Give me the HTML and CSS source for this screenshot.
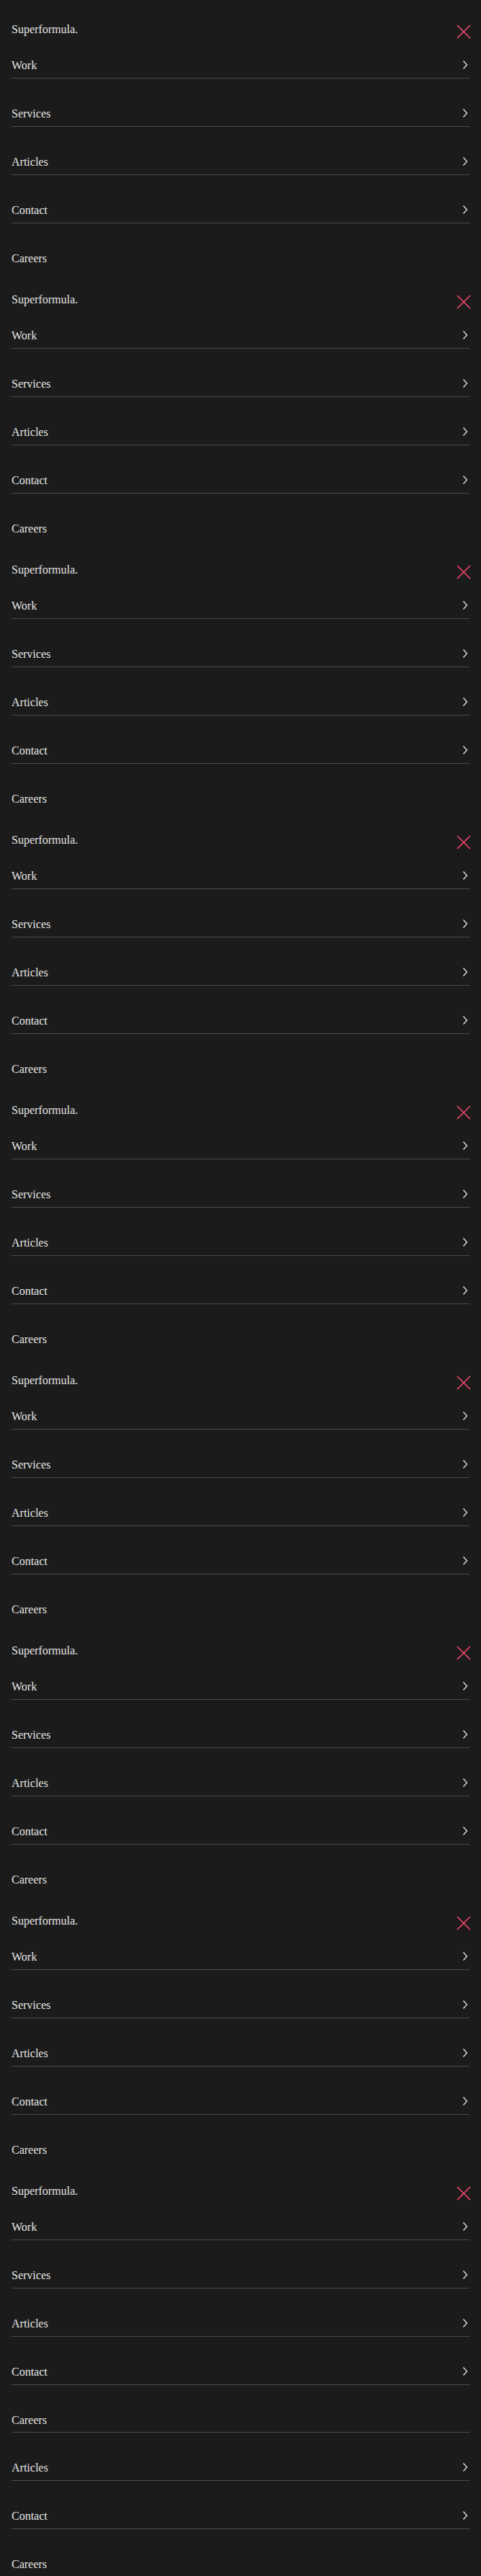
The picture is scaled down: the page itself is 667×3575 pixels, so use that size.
FILE: index.html
```html
<!DOCTYPE html>
<html lang="en">
<head>
<meta charset="utf-8">
<title>Superformula menu</title>
<link rel="stylesheet" href="styles.css">
</head>
<body>
<div class="page">
  <section class="menu">
    <header class="menu-head"><span class="logo">Superformula.</span><svg class="close" viewBox="0 0 20 20"><path d="M1 1L19 19M19 1L1 19"/></svg></header>
    <ul class="menu-list">
      <li class="item"><span class="label">Work</span><svg class="chev" viewBox="0 0 10 19"><polyline points="1.5,2.5 6.5,8 1.5,13.5"/></svg></li>
      <li class="item"><span class="label">Services</span><svg class="chev" viewBox="0 0 10 19"><polyline points="1.5,2.5 6.5,8 1.5,13.5"/></svg></li>
      <li class="item"><span class="label">Articles</span><svg class="chev" viewBox="0 0 10 19"><polyline points="1.5,2.5 6.5,8 1.5,13.5"/></svg></li>
      <li class="item"><span class="label">Contact</span><svg class="chev" viewBox="0 0 10 19"><polyline points="1.5,2.5 6.5,8 1.5,13.5"/></svg></li>
      <li class="item"><span class="label">Careers</span></li>
    </ul>
  </section>
  <section class="menu">
    <header class="menu-head"><span class="logo">Superformula.</span><svg class="close" viewBox="0 0 20 20"><path d="M1 1L19 19M19 1L1 19"/></svg></header>
    <ul class="menu-list">
      <li class="item"><span class="label">Work</span><svg class="chev" viewBox="0 0 10 19"><polyline points="1.5,2.5 6.5,8 1.5,13.5"/></svg></li>
      <li class="item"><span class="label">Services</span><svg class="chev" viewBox="0 0 10 19"><polyline points="1.5,2.5 6.5,8 1.5,13.5"/></svg></li>
      <li class="item"><span class="label">Articles</span><svg class="chev" viewBox="0 0 10 19"><polyline points="1.5,2.5 6.5,8 1.5,13.5"/></svg></li>
      <li class="item"><span class="label">Contact</span><svg class="chev" viewBox="0 0 10 19"><polyline points="1.5,2.5 6.5,8 1.5,13.5"/></svg></li>
      <li class="item"><span class="label">Careers</span></li>
    </ul>
  </section>
  <section class="menu">
    <header class="menu-head"><span class="logo">Superformula.</span><svg class="close" viewBox="0 0 20 20"><path d="M1 1L19 19M19 1L1 19"/></svg></header>
    <ul class="menu-list">
      <li class="item"><span class="label">Work</span><svg class="chev" viewBox="0 0 10 19"><polyline points="1.5,2.5 6.5,8 1.5,13.5"/></svg></li>
      <li class="item"><span class="label">Services</span><svg class="chev" viewBox="0 0 10 19"><polyline points="1.5,2.5 6.5,8 1.5,13.5"/></svg></li>
      <li class="item"><span class="label">Articles</span><svg class="chev" viewBox="0 0 10 19"><polyline points="1.5,2.5 6.5,8 1.5,13.5"/></svg></li>
      <li class="item"><span class="label">Contact</span><svg class="chev" viewBox="0 0 10 19"><polyline points="1.5,2.5 6.5,8 1.5,13.5"/></svg></li>
      <li class="item"><span class="label">Careers</span></li>
    </ul>
  </section>
  <section class="menu">
    <header class="menu-head"><span class="logo">Superformula.</span><svg class="close" viewBox="0 0 20 20"><path d="M1 1L19 19M19 1L1 19"/></svg></header>
    <ul class="menu-list">
      <li class="item"><span class="label">Work</span><svg class="chev" viewBox="0 0 10 19"><polyline points="1.5,2.5 6.5,8 1.5,13.5"/></svg></li>
      <li class="item"><span class="label">Services</span><svg class="chev" viewBox="0 0 10 19"><polyline points="1.5,2.5 6.5,8 1.5,13.5"/></svg></li>
      <li class="item"><span class="label">Articles</span><svg class="chev" viewBox="0 0 10 19"><polyline points="1.5,2.5 6.5,8 1.5,13.5"/></svg></li>
      <li class="item"><span class="label">Contact</span><svg class="chev" viewBox="0 0 10 19"><polyline points="1.5,2.5 6.5,8 1.5,13.5"/></svg></li>
      <li class="item"><span class="label">Careers</span></li>
    </ul>
  </section>
  <section class="menu">
    <header class="menu-head"><span class="logo">Superformula.</span><svg class="close" viewBox="0 0 20 20"><path d="M1 1L19 19M19 1L1 19"/></svg></header>
    <ul class="menu-list">
      <li class="item"><span class="label">Work</span><svg class="chev" viewBox="0 0 10 19"><polyline points="1.5,2.5 6.5,8 1.5,13.5"/></svg></li>
      <li class="item"><span class="label">Services</span><svg class="chev" viewBox="0 0 10 19"><polyline points="1.5,2.5 6.5,8 1.5,13.5"/></svg></li>
      <li class="item"><span class="label">Articles</span><svg class="chev" viewBox="0 0 10 19"><polyline points="1.5,2.5 6.5,8 1.5,13.5"/></svg></li>
      <li class="item"><span class="label">Contact</span><svg class="chev" viewBox="0 0 10 19"><polyline points="1.5,2.5 6.5,8 1.5,13.5"/></svg></li>
      <li class="item"><span class="label">Careers</span></li>
    </ul>
  </section>
  <section class="menu">
    <header class="menu-head"><span class="logo">Superformula.</span><svg class="close" viewBox="0 0 20 20"><path d="M1 1L19 19M19 1L1 19"/></svg></header>
    <ul class="menu-list">
      <li class="item"><span class="label">Work</span><svg class="chev" viewBox="0 0 10 19"><polyline points="1.5,2.5 6.5,8 1.5,13.5"/></svg></li>
      <li class="item"><span class="label">Services</span><svg class="chev" viewBox="0 0 10 19"><polyline points="1.5,2.5 6.5,8 1.5,13.5"/></svg></li>
      <li class="item"><span class="label">Articles</span><svg class="chev" viewBox="0 0 10 19"><polyline points="1.5,2.5 6.5,8 1.5,13.5"/></svg></li>
      <li class="item"><span class="label">Contact</span><svg class="chev" viewBox="0 0 10 19"><polyline points="1.5,2.5 6.5,8 1.5,13.5"/></svg></li>
      <li class="item"><span class="label">Careers</span></li>
    </ul>
  </section>
  <section class="menu">
    <header class="menu-head"><span class="logo">Superformula.</span><svg class="close" viewBox="0 0 20 20"><path d="M1 1L19 19M19 1L1 19"/></svg></header>
    <ul class="menu-list">
      <li class="item"><span class="label">Work</span><svg class="chev" viewBox="0 0 10 19"><polyline points="1.5,2.5 6.5,8 1.5,13.5"/></svg></li>
      <li class="item"><span class="label">Services</span><svg class="chev" viewBox="0 0 10 19"><polyline points="1.5,2.5 6.5,8 1.5,13.5"/></svg></li>
      <li class="item"><span class="label">Articles</span><svg class="chev" viewBox="0 0 10 19"><polyline points="1.5,2.5 6.5,8 1.5,13.5"/></svg></li>
      <li class="item"><span class="label">Contact</span><svg class="chev" viewBox="0 0 10 19"><polyline points="1.5,2.5 6.5,8 1.5,13.5"/></svg></li>
      <li class="item"><span class="label">Careers</span></li>
    </ul>
  </section>
  <section class="menu">
    <header class="menu-head"><span class="logo">Superformula.</span><svg class="close" viewBox="0 0 20 20"><path d="M1 1L19 19M19 1L1 19"/></svg></header>
    <ul class="menu-list">
      <li class="item"><span class="label">Work</span><svg class="chev" viewBox="0 0 10 19"><polyline points="1.5,2.5 6.5,8 1.5,13.5"/></svg></li>
      <li class="item"><span class="label">Services</span><svg class="chev" viewBox="0 0 10 19"><polyline points="1.5,2.5 6.5,8 1.5,13.5"/></svg></li>
      <li class="item"><span class="label">Articles</span><svg class="chev" viewBox="0 0 10 19"><polyline points="1.5,2.5 6.5,8 1.5,13.5"/></svg></li>
      <li class="item"><span class="label">Contact</span><svg class="chev" viewBox="0 0 10 19"><polyline points="1.5,2.5 6.5,8 1.5,13.5"/></svg></li>
      <li class="item"><span class="label">Careers</span></li>
    </ul>
  </section>
  <section class="menu">
    <header class="menu-head"><span class="logo">Superformula.</span><svg class="close" viewBox="0 0 20 20"><path d="M1 1L19 19M19 1L1 19"/></svg></header>
    <ul class="menu-list">
      <li class="item"><span class="label">Work</span><svg class="chev" viewBox="0 0 10 19"><polyline points="1.5,2.5 6.5,8 1.5,13.5"/></svg></li>
      <li class="item"><span class="label">Services</span><svg class="chev" viewBox="0 0 10 19"><polyline points="1.5,2.5 6.5,8 1.5,13.5"/></svg></li>
      <li class="item"><span class="label">Articles</span><svg class="chev" viewBox="0 0 10 19"><polyline points="1.5,2.5 6.5,8 1.5,13.5"/></svg></li>
      <li class="item"><span class="label">Contact</span><svg class="chev" viewBox="0 0 10 19"><polyline points="1.5,2.5 6.5,8 1.5,13.5"/></svg></li>
      <li class="item"><span class="label">Careers</span></li>
      <li class="item"><span class="label">Articles</span><svg class="chev" viewBox="0 0 10 19"><polyline points="1.5,2.5 6.5,8 1.5,13.5"/></svg></li>
      <li class="item"><span class="label">Contact</span><svg class="chev" viewBox="0 0 10 19"><polyline points="1.5,2.5 6.5,8 1.5,13.5"/></svg></li>
      <li class="item"><span class="label">Careers</span></li>
    </ul>
  </section>
</div>
</body>
</html>
```

FILE: styles.css
```css
html, body {
  margin: 0;
  padding: 0;
  background: #1b1b1b;
}

body {
  font-family: "Liberation Serif", "Times New Roman", serif;
  font-size: 16px;
  color: #e6e6e6;
}

.page {
  width: 667px;
}

.menu {
  padding: 0 16px;
}

.menu-head {
  display: flex;
  justify-content: space-between;
  align-items: flex-start;
  padding-top: 32px;
}

.logo {
  display: block;
  line-height: 18px;
}

.close {
  width: 20px;
  height: 20px;
  margin-top: 2px;
  margin-right: -2px;
  fill: none;
  stroke: #f2476d;
  stroke-width: 1.6;
}

.menu-list {
  list-style: none;
  margin: 0;
  padding: 0;
}

.item {
  display: flex;
  justify-content: space-between;
  align-items: flex-start;
  padding: 40px 0 7px;
  border-bottom: 1px solid #4a4a4a;
}

.item:first-child {
  padding-top: 28px;
}

.item:last-child {
  border-bottom: none;
}

.label {
  display: block;
  line-height: 18px;
}

.chev {
  width: 10px;
  height: 19px;
  fill: none;
  stroke: #e6e6e6;
  stroke-width: 1.3;
}
```
